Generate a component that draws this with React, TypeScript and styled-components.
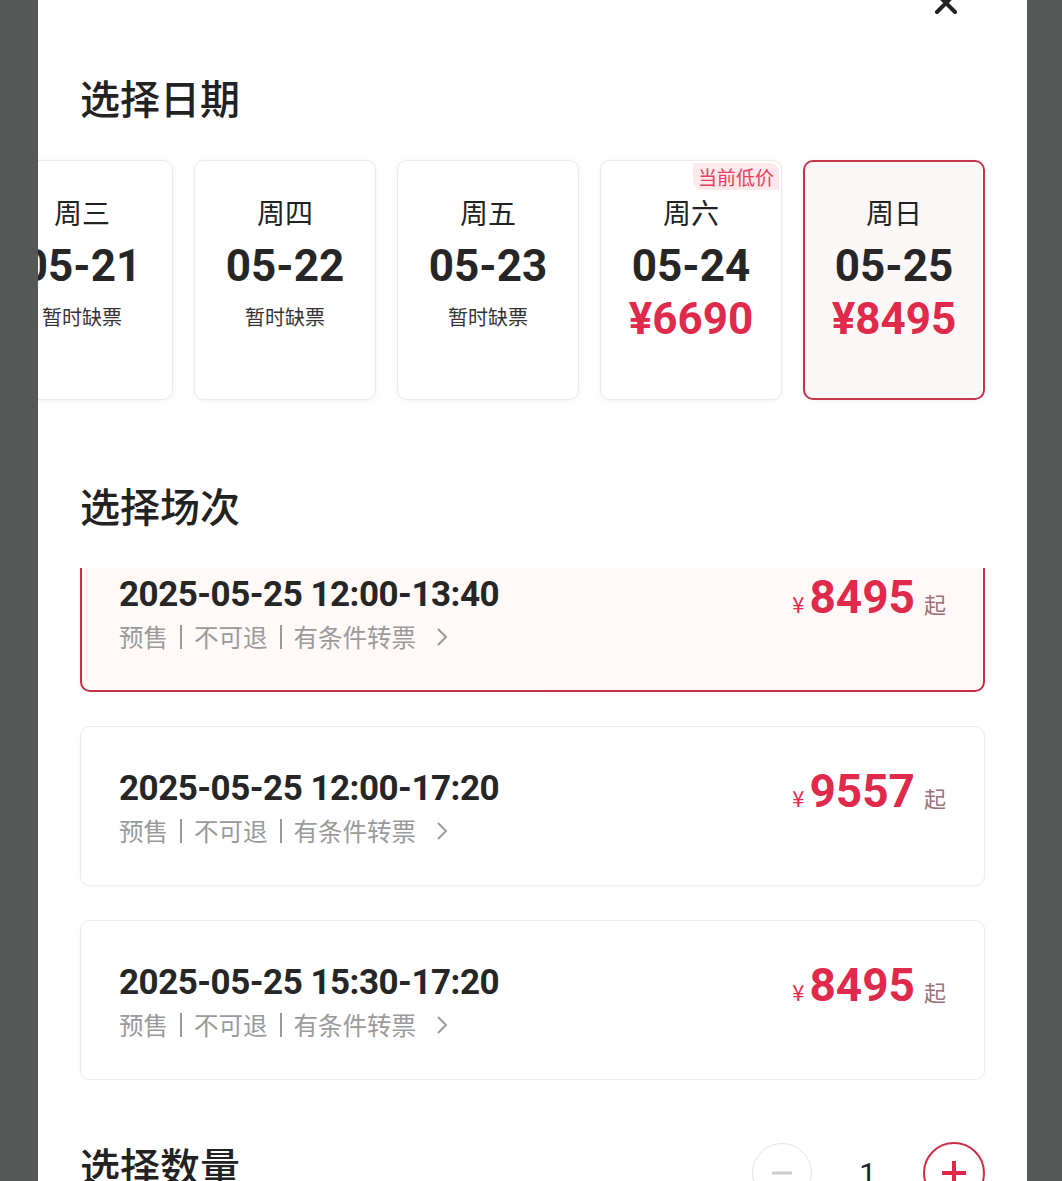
import React from "react";
import styled, { createGlobalStyle } from "styled-components";

const GlobalStyle = createGlobalStyle`
  html, body { margin: 0; padding: 0; background: #555857; }
  body { font-family: "Noto Sans CJK SC", "Noto Sans", sans-serif; }
  * { box-sizing: border-box; }
`;

const Page = styled.div`
  height: 1181px;
  display: flex;
  padding: 0 35px 0 38px;
  background: #555857;
`;

const Panel = styled.main`
  flex: 1;
  background: #ffffff;
  overflow: hidden;
`;

const Sheet = styled.div`
  margin-top: -12px;
  display: flex;
  flex-direction: column;
`;

const CloseRow = styled.div`
  display: flex;
  justify-content: flex-end;
  height: 28px;
  padding: 2px 68px 0 0;
`;

const CloseButton = styled.button`
  border: 0;
  background: none;
  padding: 0;
  width: 26px;
  height: 26px;
  display: flex;
`;

const SectionTitle = styled.h2<{ $top: number }>`
  margin: ${(p) => p.$top}px 0 0 42px;
  font-size: 40px;
  line-height: 40px;
  font-weight: 500;
  color: #222;
`;

const DateViewport = styled.div`
  margin-top: 39px;
  padding: 4px 0;
  overflow: hidden;
`;

const DateRow = styled.div`
  display: flex;
  gap: 21px;
  margin-left: -47px;
`;

const DateCard = styled.div<{ $active?: boolean }>`
  position: relative;
  flex: none;
  width: 182px;
  height: 240px;
  border-radius: 10px;
  border: ${(p) => (p.$active ? "2px solid #c5334c" : "1px solid #ebebeb")};
  background: ${(p) => (p.$active ? "#fdf8f8" : "#ffffff")};
  box-shadow: 0 1px 6px rgba(0, 0, 0, 0.05);
  display: flex;
  flex-direction: column;
  align-items: center;
  padding-top: ${(p) => (p.$active ? 32 : 33)}px;
`;

const Badge = styled.span`
  position: absolute;
  top: 2px;
  right: 2px;
  padding: 0 5px;
  height: 27px;
  line-height: 27px;
  font-size: 19px;
  color: #e5405e;
  background: #fde9ec;
  border-radius: 0 9px 0 9px;
`;

const Weekday = styled.div`
  font-size: 28px;
  line-height: 36px;
  color: #222;
`;

const DateNum = styled.div`
  margin-top: 10px;
  font-family: Roboto, "Liberation Sans", sans-serif;
  font-weight: 700;
  font-size: 44px;
  line-height: 52px;
  color: #262626;
`;

const SoldOut = styled.div`
  margin-top: -1px;
  font-size: 20px;
  line-height: 52px;
  color: #333;
`;

const DayPrice = styled.div`
  margin-top: 1px;
  font-family: Roboto, "Liberation Sans", sans-serif;
  font-weight: 700;
  font-size: 44px;
  line-height: 52px;
  color: #e02a4c;
`;

const SessionViewport = styled.div`
  margin-top: 43px;
  padding: 0 42px;
  overflow: hidden;
`;

const SessionList = styled.div`
  margin-top: -36px;
  display: flex;
  flex-direction: column;
  gap: 34px;
`;

const SessionCard = styled.div<{ $active?: boolean }>`
  height: 160px;
  border-radius: 10px;
  border: ${(p) => (p.$active ? "2px solid #c62f48" : "1px solid #ececec")};
  background: ${(p) =>
    p.$active ? "linear-gradient(90deg, #fffaf8, #fff8f8)" : "#ffffff"};
  box-shadow: 0 1px 5px rgba(0, 0, 0, 0.03);
  display: flex;
  justify-content: space-between;
  align-items: flex-start;
  padding: ${(p) => (p.$active ? "39px 37px 0" : "40px 38px 0")};
`;

const Info = styled.div`
  display: flex;
  flex-direction: column;
`;

const DateTime = styled.div`
  font-family: Roboto, "Liberation Sans", sans-serif;
  font-weight: 700;
  font-size: 35px;
  letter-spacing: -0.5px;
  line-height: 44px;
  color: #262626;
`;

const Meta = styled.div`
  margin-top: 4px;
  display: flex;
  align-items: center;
  font-size: 24.5px;
  line-height: 32px;
  color: #9a9a9a;
`;

const Sep = styled.span`
  display: inline-block;
  width: 2px;
  height: 24px;
  margin: 0 12px;
  background: #9a9a9a;
`;

const Chevron = styled.svg`
  margin-left: 20px;
`;

const PriceBox = styled.div`
  margin-top: -2px;
  display: flex;
  align-items: baseline;
`;

const Yuan = styled.span`
  font-size: 22px;
  color: #e02a4c;
  margin-right: 5px;
`;

const Amount = styled.span`
  font-family: Roboto, "Liberation Sans", sans-serif;
  font-weight: 700;
  font-size: 46px;
  line-height: 52px;
  color: #e02a4c;
`;

const Qi = styled.span`
  margin-left: 9px;
  font-size: 22px;
  color: #9c7077;
`;

const QtyRow = styled.div`
  margin-top: 62px;
  display: flex;
  justify-content: space-between;
  align-items: flex-start;
  padding-right: 42px;
`;

const Stepper = styled.div`
  display: flex;
  align-items: center;
  gap: 47px;
`;

const StepButton = styled.button<{ $plus?: boolean }>`
  width: ${(p) => (p.$plus ? 62 : 60)}px;
  height: ${(p) => (p.$plus ? 62 : 60)}px;
  border-radius: 50%;
  border: ${(p) => (p.$plus ? "2px solid #c83049" : "1.5px solid #e2e2e2")};
  background: #fff;
  padding: 0;
  display: flex;
  align-items: center;
  justify-content: center;
`;

const Count = styled.span`
  font-family: Roboto, "Liberation Sans", sans-serif;
  font-size: 30px;
  color: #222;
`;

const days = [
  { wd: "周三", date: "05-21" },
  { wd: "周四", date: "05-22" },
  { wd: "周五", date: "05-23" },
  { wd: "周六", date: "05-24", price: "¥6690", badge: "当前低价" },
  { wd: "周日", date: "05-25", price: "¥8495", active: true },
];

const sessions = [
  { time: "2025-05-25 12:00-13:40", price: "8495", active: true },
  { time: "2025-05-25 12:00-17:20", price: "9557" },
  { time: "2025-05-25 15:30-17:20", price: "8495" },
];

export default function App() {
  return (
    <>
      <GlobalStyle />
      <Page>
        <Panel>
          <Sheet>
            <CloseRow>
              <CloseButton aria-label="关闭">
                <svg width="26" height="26" viewBox="0 0 26 26">
                  <path
                    d="M4 4 L22 22 M22 4 L4 22"
                    stroke="#222"
                    strokeWidth="4"
                    strokeLinecap="round"
                  />
                </svg>
              </CloseButton>
            </CloseRow>

            <SectionTitle $top={61}>选择日期</SectionTitle>
            <DateViewport>
              <DateRow>
                {days.map((d) => (
                  <DateCard key={d.date} $active={d.active}>
                    {d.badge && <Badge>{d.badge}</Badge>}
                    <Weekday>{d.wd}</Weekday>
                    <DateNum>{d.date}</DateNum>
                    {d.price ? (
                      <DayPrice>{d.price}</DayPrice>
                    ) : (
                      <SoldOut>暂时缺票</SoldOut>
                    )}
                  </DateCard>
                ))}
              </DateRow>
            </DateViewport>

            <SectionTitle $top={81}>选择场次</SectionTitle>
            <SessionViewport>
              <SessionList>
                {sessions.map((s) => (
                  <SessionCard key={s.time} $active={s.active}>
                    <Info>
                      <DateTime>{s.time}</DateTime>
                      <Meta>
                        预售
                        <Sep />
                        不可退
                        <Sep />
                        有条件转票
                        <Chevron width="12" height="20" viewBox="0 0 12 20">
                          <path
                            d="M2 2 L10 10 L2 18"
                            fill="none"
                            stroke="#9a9a9a"
                            strokeWidth="2"
                          />
                        </Chevron>
                      </Meta>
                    </Info>
                    <PriceBox>
                      <Yuan>¥</Yuan>
                      <Amount>{s.price}</Amount>
                      <Qi>起</Qi>
                    </PriceBox>
                  </SessionCard>
                ))}
              </SessionList>
            </SessionViewport>

            <QtyRow>
              <SectionTitle $top={3}>选择数量</SectionTitle>
              <Stepper>
                <StepButton aria-label="减少">
                  <svg width="24" height="24" viewBox="0 0 24 24">
                    <path d="M2 12 H22" stroke="#cfcfcf" strokeWidth="3" />
                  </svg>
                </StepButton>
                <Count>1</Count>
                <StepButton $plus aria-label="增加">
                  <svg width="28" height="28" viewBox="0 0 28 28">
                    <path
                      d="M2 14 H26 M14 2 V26"
                      stroke="#e0284a"
                      strokeWidth="4"
                    />
                  </svg>
                </StepButton>
              </Stepper>
            </QtyRow>
          </Sheet>
        </Panel>
      </Page>
    </>
  );
}
